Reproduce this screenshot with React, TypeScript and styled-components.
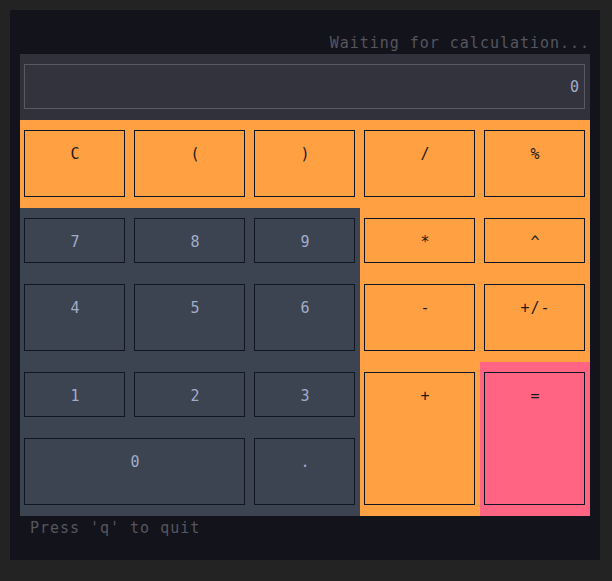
import styled, { createGlobalStyle } from 'styled-components'

const colors = {
    page: '#232323',
    frame: '#13131c',
    panel: '#31313b',
    display: '#33333d',
    displayBorder: '#595963',
    orange: '#ffa043',
    pink: '#ff6482',
    slate: '#3b4450',
    keyBorder: '#101626',
    numText: '#a3abcb',
    opText: '#1f1a17',
    muted: '#56565f',
}

const GlobalStyle = createGlobalStyle`
    html, body {
        margin: 0;
        padding: 0;
        background: ${colors.page};
    }
    body {
        padding: 10px;
        font-family: 'DejaVu Sans Mono', 'Liberation Mono', monospace;
        font-size: 15px;
        letter-spacing: 0.98px;
    }
`

type Kind = 'num' | 'op' | 'eq'

type Key = {
    label: string
    kind: Kind
    col: number
    row: number
    colSpan?: number
    rowSpan?: number
}

const keys: Key[] = [
    { label: 'C', kind: 'op', col: 1, row: 1 },
    { label: '(', kind: 'op', col: 2, row: 1 },
    { label: ')', kind: 'op', col: 3, row: 1 },
    { label: '/', kind: 'op', col: 4, row: 1 },
    { label: '%', kind: 'op', col: 5, row: 1 },
    { label: '7', kind: 'num', col: 1, row: 2 },
    { label: '8', kind: 'num', col: 2, row: 2 },
    { label: '9', kind: 'num', col: 3, row: 2 },
    { label: '*', kind: 'op', col: 4, row: 2 },
    { label: '^', kind: 'op', col: 5, row: 2 },
    { label: '4', kind: 'num', col: 1, row: 3 },
    { label: '5', kind: 'num', col: 2, row: 3 },
    { label: '6', kind: 'num', col: 3, row: 3 },
    { label: '-', kind: 'op', col: 4, row: 3 },
    { label: '+/-', kind: 'op', col: 5, row: 3 },
    { label: '1', kind: 'num', col: 1, row: 4 },
    { label: '2', kind: 'num', col: 2, row: 4 },
    { label: '3', kind: 'num', col: 3, row: 4 },
    { label: '+', kind: 'op', col: 4, row: 4, rowSpan: 2 },
    { label: '=', kind: 'eq', col: 5, row: 4, rowSpan: 2 },
    { label: '0', kind: 'num', col: 1, row: 5, colSpan: 2 },
    { label: '.', kind: 'num', col: 3, row: 5 },
]

const cellBg = (kind: Kind) =>
    kind === 'num' ? colors.slate : kind === 'eq' ? colors.pink : colors.orange

export default function App() {
    return (
        <>
            <GlobalStyle />
            <Frame>
                <Status>Waiting for calculation...</Status>
                <Panel>
                    <DisplayArea>
                        <Display>0</Display>
                    </DisplayArea>
                    <Keypad>
                        {keys.map((k) => (
                            <Cell
                                key={k.label}
                                $kind={k.kind}
                                $col={k.col}
                                $row={k.row}
                                $colSpan={k.colSpan ?? 1}
                                $rowSpan={k.rowSpan ?? 1}
                            >
                                <KeyButton
                                    $kind={k.kind}
                                    $shift={(k.col === 2 || k.col === 4) && !k.colSpan}
                                >
                                    {k.label}
                                </KeyButton>
                            </Cell>
                        ))}
                    </Keypad>
                </Panel>
                <Footer>Press 'q' to quit</Footer>
            </Frame>
        </>
    )
}

const Frame = styled.div`
    width: 590px;
    height: 550px;
    box-sizing: border-box;
    background: ${colors.frame};
    padding: 22px 10px 0;
    display: flex;
    flex-direction: column;
`

const Status = styled.div`
    height: 22px;
    line-height: 22px;
    text-align: right;
    color: ${colors.muted};
    white-space: pre;
`

const Panel = styled.div`
    display: flex;
    flex-direction: column;
`

const DisplayArea = styled.div`
    height: 66px;
    box-sizing: border-box;
    background: ${colors.panel};
    padding: 10px 5px 11px 4px;
`

const Display = styled.div`
    height: 45px;
    box-sizing: border-box;
    border: 1px solid ${colors.displayBorder};
    background: ${colors.display};
    color: ${colors.numText};
    text-align: right;
    line-height: 44px;
    padding-right: 4px;
`

const Keypad = styled.div`
    display: grid;
    grid-template-columns: 110px 120px 110px 120px 110px;
    grid-template-rows: 88px 66px 88px 66px 88px;
`

const Cell = styled.div<{
    $kind: Kind
    $col: number
    $row: number
    $colSpan: number
    $rowSpan: number
}>`
    grid-column: ${(p) => p.$col} / span ${(p) => p.$colSpan};
    grid-row: ${(p) => p.$row} / span ${(p) => p.$rowSpan};
    background: ${(p) => cellBg(p.$kind)};
    padding: 10px 5px 11px 4px;
    display: flex;
`

const KeyButton = styled.div<{ $kind: Kind; $shift: boolean }>`
    flex: 1;
    box-sizing: border-box;
    border: 1px solid ${colors.keyBorder};
    background: ${(p) => cellBg(p.$kind)};
    color: ${(p) => (p.$kind === 'num' ? colors.numText : colors.opText)};
    padding-top: 12px;
    padding-left: ${(p) => (p.$shift ? '12px' : '2px')};
    line-height: 22px;
    text-align: center;
    white-space: pre;
`

const Footer = styled.div`
    height: 22px;
    line-height: 22px;
    padding-top: 1px;
    padding-left: 10px;
    color: ${colors.muted};
    white-space: pre;
`
